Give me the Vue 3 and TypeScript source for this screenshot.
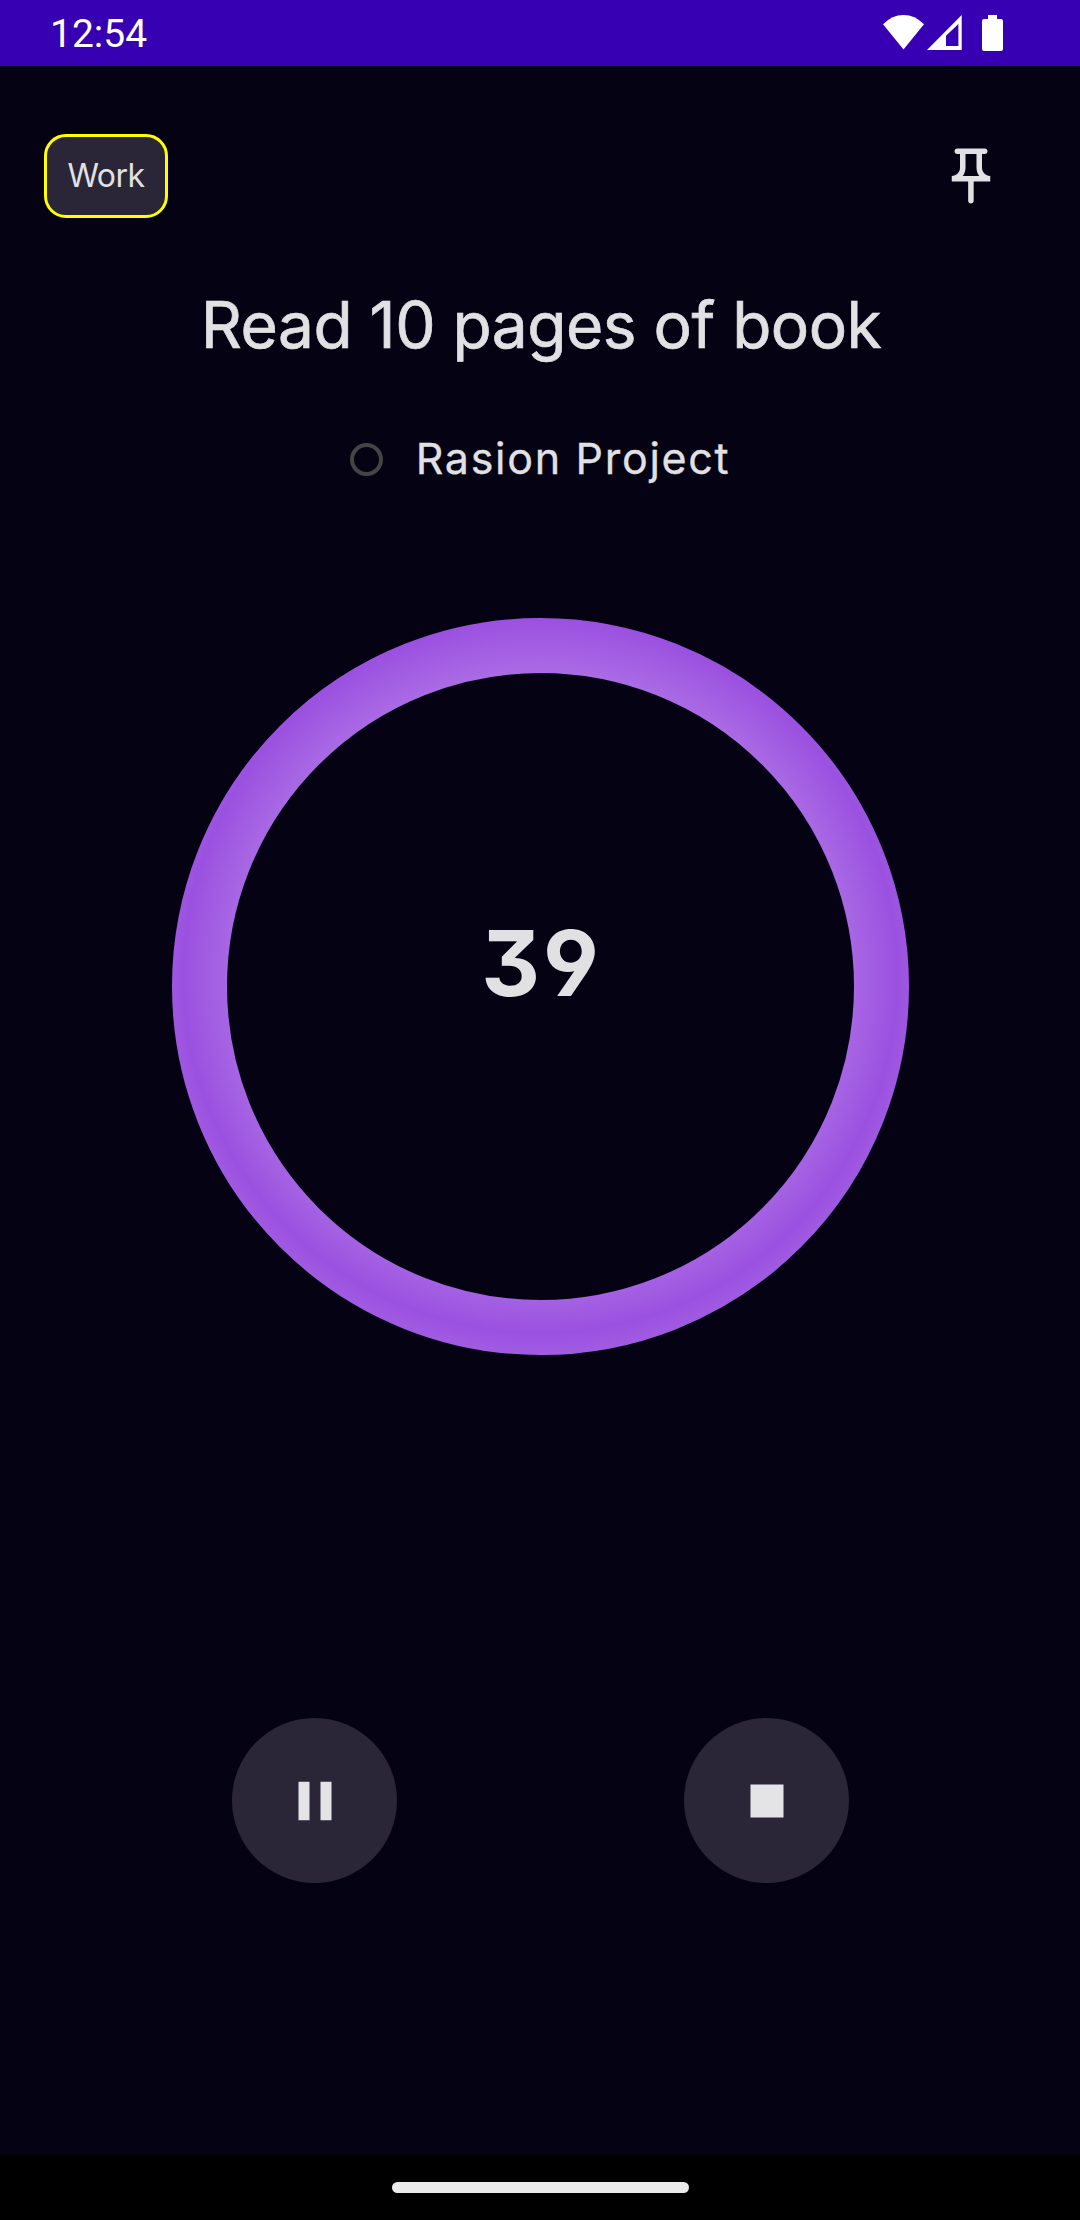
<script setup lang="ts">
import { ref } from 'vue'

const time = ref('12:54')
const category = ref('Work')
const title = ref('Read 10 pages of book')
const project = ref('Rasion Project')
const remaining = ref(39)
</script>

<template>
  <div class="screen">
    <header class="status">
      <span class="clock">{{ time }}</span>
      <svg class="wifi" viewBox="0 0 41 35" aria-hidden="true">
        <path d="M0 9.3Q9 0 20.5 0T41 9.3L20.5 34.5Z" />
      </svg>
      <svg class="signal" viewBox="0 0 35 35" aria-hidden="true">
        <path fill-rule="evenodd" d="M0 35L34.7 0V35ZM19 20.8V31H31.4V9Z" />
      </svg>
      <svg class="battery" viewBox="0 0 21 36" aria-hidden="true">
        <path d="M6 0H15V4H19Q21 4 21 6V34Q21 36 19 36H2Q0 36 0 34V6Q0 4 2 4H6Z" />
      </svg>
    </header>

    <main class="content">
      <div class="toolbar">
        <div class="chip"><span>{{ category }}</span></div>
        <svg class="pin" viewBox="0 0 24 24" aria-hidden="true">
          <path
            d="M14 4v5c0 1.12.37 2.16 1 3H9c.65-.86 1-1.9 1-3V4h4m3-2H7c-.55 0-1 .45-1 1s.45 1 1 1h1v5c0 1.66-1.34 3-3 3v2h5.97v7c0 .55.45 1 1 1s1-.45 1-1v-7H19v-2c-1.66 0-3-1.34-3-3V4h1c.55 0 1-.45 1-1s-.45-1-1-1z"
          />
        </svg>
      </div>

      <h1 class="title"><span>{{ title }}</span></h1>

      <div class="project">
        <span class="check"></span>
        <span class="project-name">{{ project }}</span>
      </div>

      <div class="timer">
        <svg class="ring" viewBox="0 0 737 737" aria-hidden="true">
          <defs>
            <radialGradient
              id="glow"
              gradientUnits="userSpaceOnUse"
              cx="368.5"
              cy="358"
              r="357"
              spreadMethod="reflect"
            >
              <stop offset="0" stop-color="#ffffff" />
              <stop offset="1" stop-color="#9b51e0" />
            </radialGradient>
          </defs>
          <circle cx="368.5" cy="368.5" r="341" fill="none" stroke="url(#glow)" stroke-width="55" />
        </svg>
        <span class="count">{{ remaining }}</span>
      </div>

      <div class="controls">
        <button class="round" type="button" aria-label="Pause">
          <svg viewBox="0 0 24 24"><path d="M6 19h4V5H6zM14 5v14h4V5z" /></svg>
        </button>
        <button class="round" type="button" aria-label="Stop">
          <svg viewBox="0 0 24 24"><path d="M6 6h12v12H6z" /></svg>
        </button>
      </div>
    </main>

    <footer class="nav"><span class="handle"></span></footer>
  </div>
</template>

<style>
body {
  margin: 0;
  background: #050214;
}
</style>

<style scoped>
.screen {
  width: 1080px;
  height: 2220px;
  display: flex;
  flex-direction: column;
  overflow: hidden;
  background: #050214;
  color: #e1e1e3;
  font-family: Inter, Roboto, sans-serif;
}

.status {
  height: 66px;
  flex: none;
  display: flex;
  align-items: flex-start;
  box-sizing: border-box;
  padding: 15px 77px 0 50px;
  background: #3700b3;
  color: #fff;
  fill: #fff;
}

.clock {
  margin-right: auto;
  font: 400 39px/39px Roboto, sans-serif;
}

.wifi {
  width: 41px;
  height: 35px;
}

.signal {
  width: 35px;
  height: 35px;
  margin-left: 3px;
}

.battery {
  width: 21px;
  height: 36px;
  margin-left: 20px;
}

.content {
  flex: 1;
  display: flex;
  flex-direction: column;
  align-items: center;
}

.toolbar {
  width: 100%;
  box-sizing: border-box;
  display: flex;
  justify-content: space-between;
  align-items: center;
  padding: 68px 77px 0 44px;
}

.chip {
  width: 124px;
  height: 84px;
  box-sizing: border-box;
  display: flex;
  align-items: center;
  justify-content: center;
  border: 3px solid #ff0;
  border-radius: 22px;
  padding-bottom: 1px;
  background: #2a2638;
  font-size: 32px;
  letter-spacing: -0.5px;
}

.pin {
  width: 66px;
  height: 66px;
  margin-right: -0.5px;
  fill: #e1e1e3;
}

.title {
  margin: 67px 0 0 2px;
  font-size: 64px;
  line-height: 80px;
  font-weight: 400;
  letter-spacing: -0.5px;
  -webkit-text-stroke: 0.7px currentColor;
  white-space: nowrap;
}

.project {
  display: flex;
  align-items: center;
  margin-top: 64px;
  height: 60px;
}

.check {
  width: 33px;
  height: 33px;
  box-sizing: border-box;
  border: 4px solid #444;
  border-radius: 50%;
}

.project-name {
  margin-left: 33px;
  padding-bottom: 2px;
  font-size: 43px;
  letter-spacing: 1.7px;
  -webkit-text-stroke: 0.3px currentColor;
  white-space: nowrap;
}

.timer {
  display: grid;
  place-items: center;
  margin: 129px 0 0 1px;
}

.ring,
.count {
  grid-area: 1 / 1;
}

.ring {
  width: 737px;
  height: 737px;
}

.count {
  margin: 0 0 48px 2px;
  font-size: 91px;
  line-height: 110px;
  font-weight: 650;
  letter-spacing: 3px;
  font-feature-settings: 'cv04', 'cv09';
}

.controls {
  display: flex;
  gap: 287px;
  margin: 363px 0 0 1px;
}

.round {
  width: 165px;
  height: 165px;
  padding: 0;
  display: grid;
  place-items: center;
  border: 0;
  border-radius: 50%;
  background: #2a2638;
}

.round svg {
  width: 66px;
  height: 66px;
  fill: #e4e4e6;
}

.nav {
  flex: none;
  height: 66px;
  display: flex;
  align-items: center;
  justify-content: center;
  background: #000;
}

.handle {
  width: 297px;
  height: 11px;
  border-radius: 6px;
  background: #ebebeb;
}
</style>
